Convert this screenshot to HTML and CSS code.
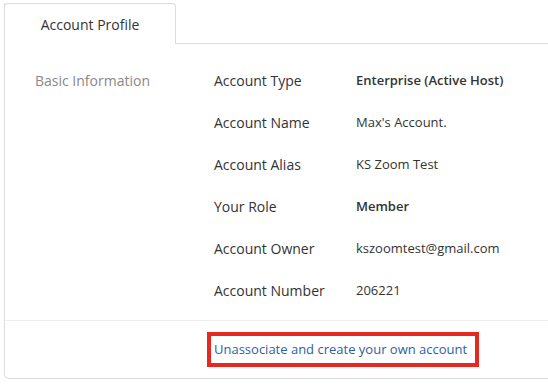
FILE: index.html
```html
<!DOCTYPE html>
<html>
<head>
<meta charset="utf-8">
<link rel="stylesheet" href="styles.css">
</head>
<body>
<div class="panel">
  <div class="tabs">
    <div class="tab">Account Profile</div>
    <div class="tab-fill"></div>
  </div>
  <div class="body">
    <div class="section-title">Basic Information</div>
    <div class="rows">
      <div class="row"><span class="label">Account Type</span><span class="value strong">Enterprise (Active Host)</span></div>
      <div class="row"><span class="label">Account Name</span><span class="value">Max's Account.</span></div>
      <div class="row"><span class="label">Account Alias</span><span class="value">KS Zoom Test</span></div>
      <div class="row"><span class="label">Your Role</span><span class="value strong">Member</span></div>
      <div class="row"><span class="label">Account Owner</span><span class="value">kszoomtest@gmail.com</span></div>
      <div class="row"><span class="label">Account Number</span><span class="value">206221</span></div>
    </div>
  </div>
  <div class="footer">
    <a class="link" href="#">Unassociate and create your own account</a>
  </div>
</div>
</body>
</html>
```
FILE: styles.css
```css
html, body {
  margin: 0;
  padding: 0;
  background: #fff;
  overflow: hidden;
}
body {
  font-family: "Open Sans", "DejaVu Sans", sans-serif;
  color: #333;
  padding: 3px 0 0 4px;
}
.panel {
  border-left: 1px solid #ddd;
  border-bottom: 1px solid #ddd;
  border-bottom-left-radius: 5px;
  height: 376px;
  box-sizing: border-box;
  display: flex;
  flex-direction: column;
}
.tabs {
  display: flex;
  height: 41px;
  margin-left: -1px;
}
.tab {
  width: 170px;
  border: 1px solid #ddd;
  border-bottom: none;
  border-radius: 4px 4px 0 0;
  display: flex;
  align-items: center;
  justify-content: center;
  font-size: 14px;
  color: #333;
  background: #fff;
}
.tab-fill {
  flex: 1;
  border-bottom: 1px solid #ddd;
}
.body {
  display: flex;
  padding: 15px 0 9px 30px;
  border-bottom: 1px solid #eee;
}
.section-title {
  width: 179px;
  margin-top: 1px;
  font-size: 14px;
  color: #888;
  line-height: 42px;
}
.rows {
  display: flex;
  flex-direction: column;
}
.row {
  display: flex;
  align-items: center;
  height: 42px;
}
.label {
  width: 142px;
  font-size: 14px;
  color: #333;
}
.value {
  font-size: 13px;
  color: #333;
}
.value.strong {
  font-weight: 600;
}
.footer {
  padding: 11px 0 0 202px;
}
.link {
  display: inline-block;
  font-size: 13px;
  color: #2c5f9e;
  text-decoration: none;
  border: 4px solid #e8281e;
  padding: 4px 8px 5px 3px;
  line-height: 18px;
}
```
